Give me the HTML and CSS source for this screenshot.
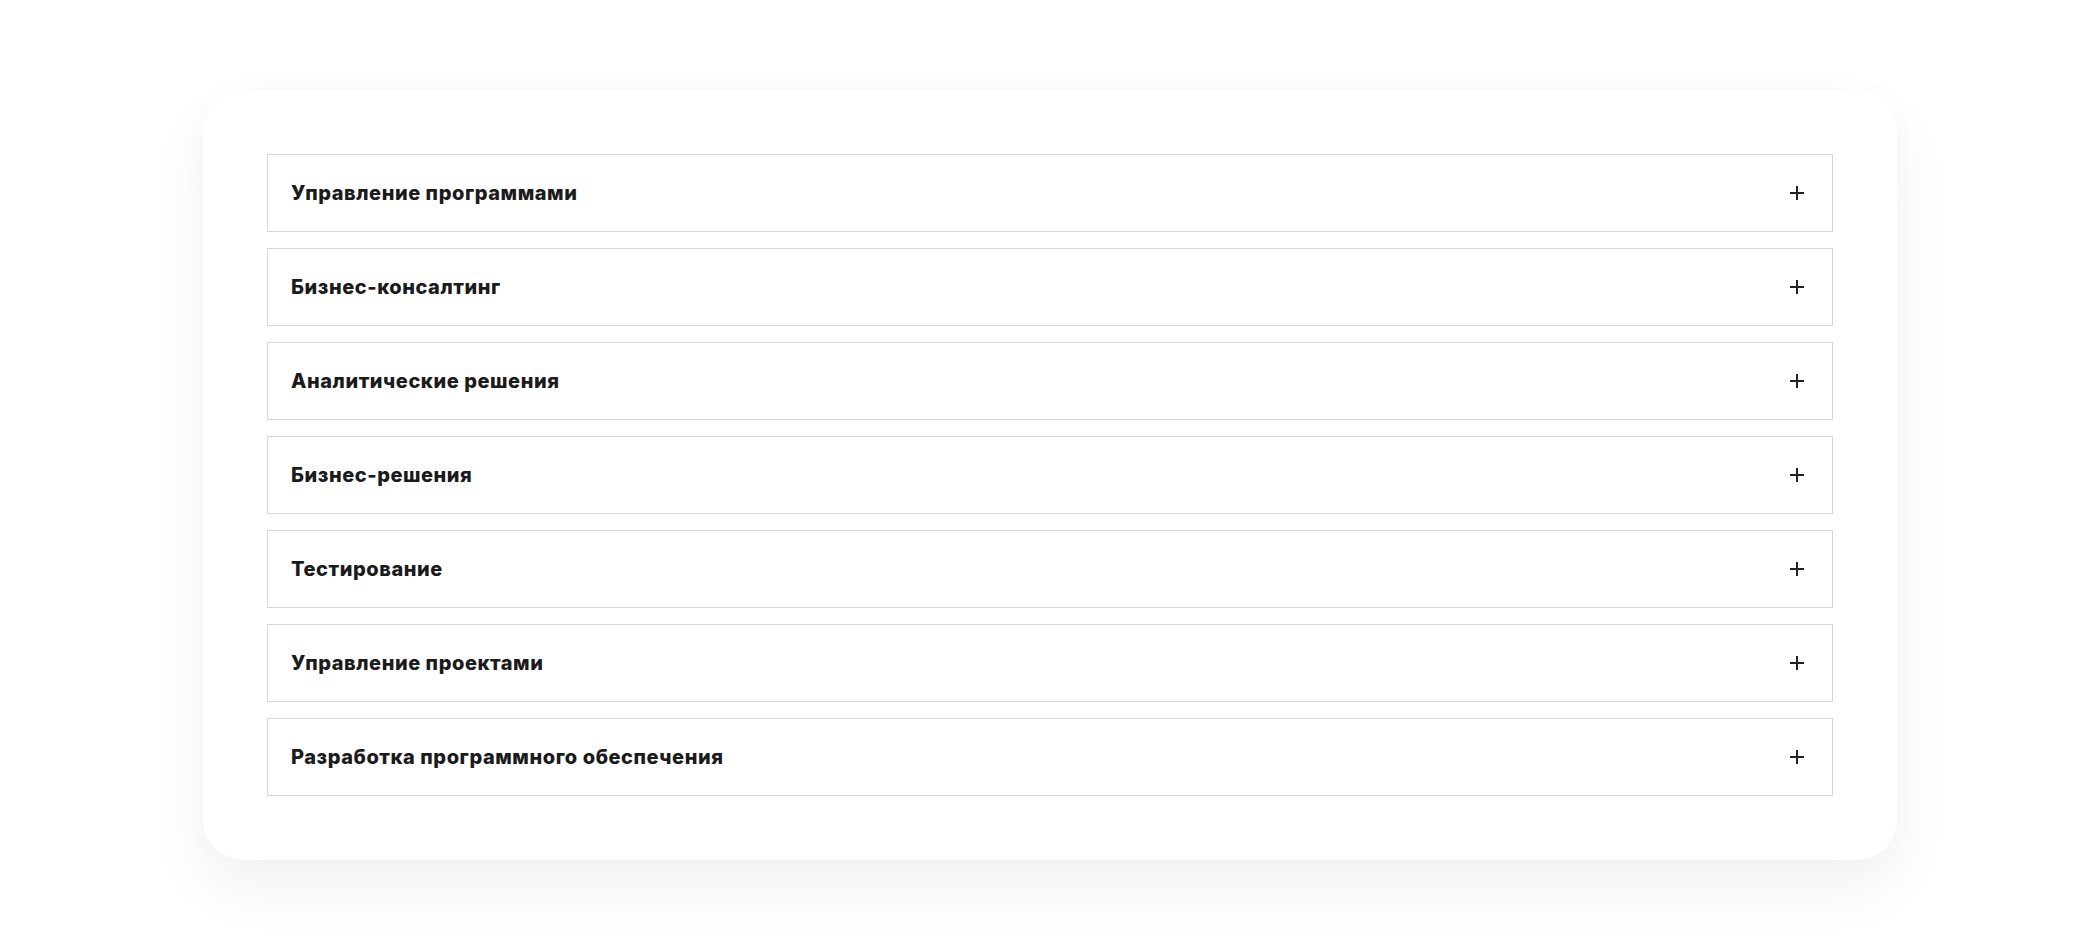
FILE: index.html
```html
<!DOCTYPE html>
<html lang="ru">
<head>
<meta charset="utf-8">
<title>Услуги</title>
<link rel="stylesheet" href="styles.css">
</head>
<body>
<main class="page">
  <section class="card">
    <div class="acc-item"><span class="acc-title">Управление программами</span><span class="plus"></span></div>
    <div class="acc-item"><span class="acc-title">Бизнес-консалтинг</span><span class="plus"></span></div>
    <div class="acc-item"><span class="acc-title">Аналитические решения</span><span class="plus"></span></div>
    <div class="acc-item"><span class="acc-title">Бизнес-решения</span><span class="plus"></span></div>
    <div class="acc-item"><span class="acc-title">Тестирование</span><span class="plus"></span></div>
    <div class="acc-item"><span class="acc-title">Управление проектами</span><span class="plus"></span></div>
    <div class="acc-item"><span class="acc-title">Разработка программного обеспечения</span><span class="plus"></span></div>
  </section>
</main>
</body>
</html>
```
FILE: styles.css
```css
html, body {
  margin: 0;
  padding: 0;
  background: #ffffff;
}
.page {
  height: 950px;
  display: flex;
  align-items: center;
  justify-content: center;
  font-family: "Inter", "Open Sans", sans-serif;
}
.card {
  width: 1694px;
  box-sizing: border-box;
  padding: 64px;
  background: #ffffff;
  border-radius: 40px;
  box-shadow: 0 28px 60px rgba(0, 0, 0, 0.055), 0 0 30px rgba(0, 0, 0, 0.02);
  display: flex;
  flex-direction: column;
  gap: 16px;
}
.acc-item {
  height: 78px;
  box-sizing: border-box;
  border: 1px solid #d6d6d6;
  display: flex;
  align-items: center;
  justify-content: space-between;
  padding: 0 28px 1px 23px;
}
.acc-title {
  font-size: 20px;
  font-weight: 800;
  color: #1b1b1b;
  letter-spacing: 0.55px;
}
.plus {
  position: relative;
  width: 14px;
  height: 14px;
}
.plus::before,
.plus::after {
  content: "";
  position: absolute;
  background: #222222;
}
.plus::before {
  left: 0;
  top: 6px;
  width: 14px;
  height: 2px;
}
.plus::after {
  left: 6px;
  top: 0;
  width: 2px;
  height: 14px;
}
```
